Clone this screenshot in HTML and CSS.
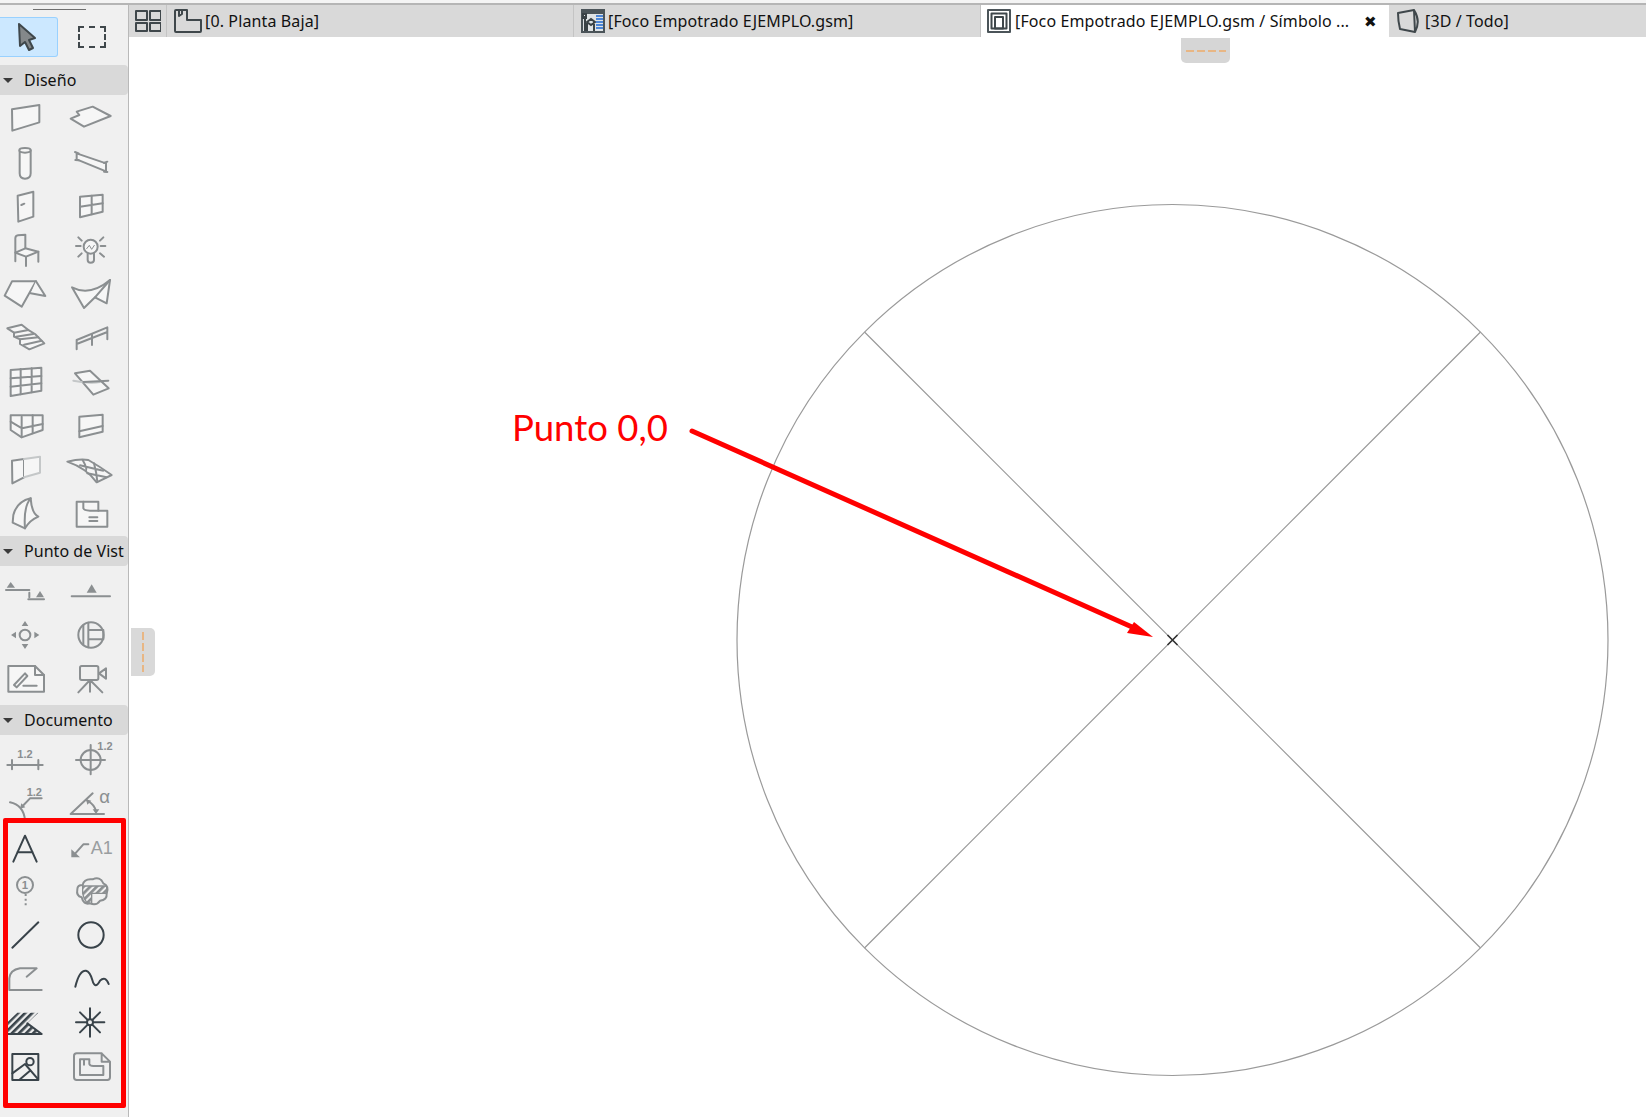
FILE: index.html
```html
<!DOCTYPE html>
<html lang="es">
<head>
<meta charset="utf-8">
<title>Foco Empotrado EJEMPLO.gsm</title>
<link rel="stylesheet" href="styles.css">
</head>
<body>
<div class="topline"></div>
<div class="app">
  <aside class="sidebar">
    <div class="grip"></div>
    <div class="tools-top">
      <div class="tool-selected">
        <svg width="58" height="40" viewBox="0 17 58 40"><path class="pointer" d="M19 24L35 38L29 40L33 48L29 50L25 42L20 46Z"/></svg>
      </div>
      <div class="tool-marquee"></div>
    </div>

    <div class="sec-head"><i class="tri"></i><span class="sec-title">Diseño</span></div>
    <div class="grid first">
      <svg class="ic" viewBox="9 18 132 132"><path class="fl" d="M36 58L118 45V97L37 122Z"/></svg>
      <svg class="ic" viewBox="207 18 132 132"><path class="fl" d="M212 86L238 75L230 65L278 50L332 78L252 110Z"/></svg>
      <svg class="ic" viewBox="9 150 132 132"><path class="fl" d="M59 181V250Q59 266 75 266Q92 266 92 250V181"/><ellipse class="fl" cx="75" cy="181" rx="17" ry="7"/></svg>
      <svg class="ic" viewBox="207 150 132 132"><path class="fl" d="M230 190L318 220V244L230 208Z"/><path d="M225 186L236 190M226 210L236 211M312 219L322 215M312 245L322 246"/></svg>
      <svg class="ic" viewBox="9 282 132 132"><path class="fl" d="M53 317L100 305V380L55 395Z"/><path d="M64 345L73 341"/></svg>
      <svg class="ic" viewBox="207 282 132 132"><path class="fl" d="M240 320L308 314V365L240 382Z"/><path d="M240 350L308 340M275 317V373"/></svg>
      <svg class="ic" viewBox="9 414 132 132"><path d="M46 514V445Q46 437 54 436L76 434V478M115 485V515M78 500V528M46 488V514"/><path class="fl" d="M46 488L76 475L115 485L78 500Z"/></svg>
      <svg class="ic" viewBox="207 414 132 132"><circle class="fl" cx="272" cy="470" r="21"/><path d="M263 490V510Q263 518 272 518Q282 518 282 510V490M228 468H242M302 468H316M235 442L245 452M310 442L300 452M235 500L245 490M312 500L300 490"/><path class="thin" d="M260 476L268 466L275 478L283 466"/></svg>
      <svg class="ic" viewBox="9 546 132 132"><path class="fl" d="M36 574H108L65 650L14 617Z"/><path class="fl" d="M108 574L136 618L92 610"/></svg>
      <svg class="ic" viewBox="207 546 132 132"><path class="fl" d="M216 592Q270 620 330 570L320 640L285 622L252 654Z"/><path d="M330 570L285 622"/></svg>

      <svg class="ic" viewBox="9 -12 132 132"><path class="fl" d="M22 25L65 14L88 32L105 42L133 70L88 88L60 72V58L42 50V38Z"/><path d="M42 38L85 30M48 50L100 42M60 58L115 52M72 74L125 62"/></svg>
      <svg class="ic" viewBox="207 -12 132 132"><path d="M230 88V60L322 22V58M230 72L322 36M276 42V75"/></svg>
      <svg class="ic" viewBox="9 120 132 132"><path class="fl" d="M32 150L124 143V212L32 228Z"/><path d="M32 175L124 168M32 200L124 190M62 147V223M95 145V217"/></svg>
      <svg class="ic" viewBox="207 120 132 132"><path class="fl" d="M225 160L270 152L326 205L280 224Z"/><path class="pale" d="M220 182Q270 192 300 186"/><path d="M250 186L325 182"/></svg>
      <svg class="ic" viewBox="9 252 132 132"><path class="fl" d="M32 286H128V330L65 352L32 330Z"/><path d="M32 305L66 325L128 312M65 290V352M98 286V340"/></svg>
      <svg class="ic" viewBox="207 252 132 132"><path class="fl" d="M238 290L308 284V335L238 352Z"/><path d="M238 334L308 318"/></svg>
      <svg class="ic" viewBox="9 384 132 132"><path class="fl" d="M36 422L72 417V472L37 490Z"/><path class="fl pale" d="M72 417L120 410V458L72 472"/></svg>
      <svg class="ic" viewBox="207 384 132 132"><path class="fl" d="M202 425Q240 415 265 420Q300 440 335 465L290 487Q260 445 202 425Z"/><path d="M248 420Q262 445 258 452M282 430Q290 460 292 485M240 436Q275 445 310 452M262 460L320 472"/></svg>
      <svg class="ic" viewBox="9 516 132 132"><path class="fl" d="M40 585Q50 545 92 535Q95 580 115 590Q90 600 75 625L38 608Z"/><path d="M92 535Q70 560 75 625"/></svg>
      <svg class="ic" viewBox="207 516 132 132"><path class="fl" d="M230 545H295V572H322V620H230Z"/><path d="M250 545V565Q252 572 270 572H295M268 592H292M268 603H292"/></svg>
    </div>

    <div class="sec-head"><i class="tri"></i><span class="sec-title">Punto de Vista</span></div>
    <div class="grid second">
      <svg class="ic" viewBox="9 84 132 132"><path class="sf" d="M32 126L20 143H45Z"/><path class="sf" d="M120 153L108 172H132Z"/><path d="M18 150H88M88 158V172"/><path d="M85 178H132"/></svg>
      <svg class="ic" viewBox="207 84 132 132"><path class="sf" d="M275 133L260 158H290Z"/><path d="M215 169H330"/></svg>
      <svg class="ic" viewBox="9 216 132 132"><circle cx="75" cy="285" r="16"/><path class="sf" d="M75 243L65 258H85ZM75 327L65 312H85ZM33 285L48 275V295ZM118 285L103 275V295Z"/></svg>
      <svg class="ic" viewBox="207 216 132 132"><circle cx="273" cy="285" r="38"/><path d="M265 248V322M265 270H310V298H265M250 256V314"/></svg>
      <svg class="ic" viewBox="9 348 132 132"><path class="fl" d="M25 378H105L132 405V455H25Z"/><path d="M105 378V405H132M42 435L75 400L82 408L50 442ZM70 437H110"/></svg>
      <svg class="ic" viewBox="207 348 132 132"><rect x="240" y="378" width="55" height="42" rx="5"/><path d="M297 400L318 385V416ZM270 420V455M270 420L235 457M270 420L307 457"/></svg>
    </div>

    <div class="sec-head doc"><i class="tri"></i><span class="sec-title">Documento</span></div>
    <div class="grid third">
      <svg class="ic" viewBox="9 594 132 132"><text class="num" x="52" y="654">1.2</text><path d="M22 675H128M36 660V688M115 660V688"/></svg>
      <svg class="ic" viewBox="207 594 132 132"><circle cx="272" cy="660" r="30"/><path d="M228 660H315M272 615V703"/><text class="num" x="292" y="630">1.2</text></svg>
      <svg class="ic" viewBox="9 726 132 132"><text class="num" x="80" y="767">1.2</text><path d="M30 787Q70 795 75 840M68 798L90 775H125"/><path class="sf" d="M60 806L64 790L76 802Z"/></svg>
      <svg class="ic" viewBox="207 726 132 132"><path d="M212 822H312M212 822L278 760M262 782Q285 795 288 815"/><path class="sf" d="M258 778L274 782L262 794ZM288 822L278 808H298Z"/><text class="alpha" x="298" y="790">α</text></svg>

      <svg class="ic dark" viewBox="9 48 132 132"><path d="M40 155L75 77L110 155M52 127H98"/></svg>
      <svg class="ic" viewBox="207 48 132 132"><path d="M265 103H250L226 130"/><path class="sf" d="M214 142V118L240 142Z"/><text class="a1" x="272" y="133">A1</text></svg>
      <svg class="ic" viewBox="9 180 132 132"><circle cx="75" cy="225" r="24"/><text class="mark" x="65" y="237">1</text><path class="dash" d="M77 252V292"/></svg>
      <svg class="ic" viewBox="207 180 132 132"><defs><pattern id="hatch-gray" width="14" height="14" patternUnits="userSpaceOnUse" patternTransform="rotate(45)"><rect width="5" height="14" fill="#8b8f91"/></pattern></defs><path d="M245 262Q228 258 232 238Q232 225 248 225Q252 205 278 208Q300 198 310 220Q328 228 320 250Q322 270 300 272Q290 288 270 280Q250 285 245 262Z"/><path class="hatch-gray" d="M248 228H320V250H275V280H262Q250 265 248 250Z"/></svg>
      <svg class="ic dark" viewBox="9 312 132 132"><path d="M37 413L115 337"/></svg>
      <svg class="ic dark" viewBox="207 312 132 132"><circle cx="273" cy="375" r="38"/></svg>
      <svg class="ic" viewBox="9 444 132 132"><path d="M80 500L110 475H60Q30 480 28 505V540H125"/></svg>
      <svg class="ic dark" viewBox="207 444 132 132"><path d="M226 530Q238 480 258 482Q270 485 277 510Q285 540 300 512Q316 496 326 522"/></svg>
      <svg class="ic dark" viewBox="9 576 132 132"><defs><pattern id="hatch-dark" width="15" height="15" patternUnits="userSpaceOnUse" patternTransform="rotate(45)"><rect width="5" height="15" fill="#39434a"/></pattern></defs><path class="hatch-dark" d="M24 672H125L82 640L115 608H52L24 635Z"/><path d="M24 672H125L82 640"/></svg>
      <svg class="ic dark" viewBox="207 576 132 132"><path d="M270 595V680M228 637H313M240 607L300 667M300 607L240 667"/><circle class="white" cx="270" cy="637" r="9"/></svg>
      <svg class="ic dark" viewBox="9 708 132 132"><rect x="37" y="732" width="78" height="78"/><circle cx="90" cy="755" r="11"/><path d="M37 790L75 762L112 805M60 808L90 782"/></svg>
      <svg class="ic" viewBox="207 708 132 132"><path d="M222 738Q222 730 230 730H305L330 755V802Q330 810 322 810H230Q222 810 222 802ZM305 730V755H330"/><path d="M240 748H268V762Q270 768 280 768H310V795H240ZM252 750V764"/></svg>
    </div>

    <div class="red-frame"></div>
  </aside>

  <main class="workspace">
    <nav class="tabs">
      <div class="tab-grid">
        <svg class="tab-svg" width="26" height="22" viewBox="0 0 26 22"><rect x="1" y="1" width="11" height="9"/><rect x="15" y="1" width="11" height="9"/><rect x="1" y="13" width="11" height="8"/><rect x="15" y="13" width="11" height="8"/></svg>
      </div>
      <div class="tab">
        <svg class="tab-svg" width="28" height="24" viewBox="0 0 28 24"><path d="M1 2Q1 1 2 1H13V11H27V22Q27 23 26 23H2Q1 23 1 22Z"/><path d="M5 1V7L8 5V1"/></svg>
        <span class="tab-text">[0. Planta Baja]</span>
      </div>
      <div class="tab">
        <svg width="24" height="24" viewBox="0 0 24 24"><rect x="0" y="0" width="24" height="24" fill="#4b5459"/><rect x="2" y="5" width="20" height="17" fill="#dfe3e5"/><path d="M2 5H5V9H2ZM4 22V7M13 22V12M6 13L10 10L14 13L10 16ZM6 22V14" fill="none" stroke="#3a4246" stroke-width="2"/><path d="M15 7H22M15 10H22M15 13H22M15 16H22M15 19H22" stroke="#4d86d6" stroke-width="2"/></svg>
        <span class="tab-text">[Foco Empotrado EJEMPLO.gsm]</span>
      </div>
      <div class="tab active">
        <svg class="tab-svg" width="24" height="24" viewBox="0 0 24 24"><rect x="1" y="1" width="22" height="22" stroke="#4b5459" stroke-width="2"/><rect x="4.5" y="4.5" width="15" height="15"/><rect x="8" y="8" width="8" height="11.5"/></svg>
        <span class="tab-text">[Foco Empotrado EJEMPLO.gsm / Símbolo ...</span>
        <span class="tab-close">✖</span>
      </div>
      <div class="tab last">
        <svg class="tab-svg" width="24" height="24" viewBox="0 0 24 24"><path d="M1 4L17 1L18 23L3 20Q1 12 1 4ZM17 1Q24 12 18 23"/></svg>
        <span class="tab-text">[3D / Todo]</span>
      </div>
    </nav>
    <section class="canvas">
      <svg class="drawing" viewBox="129 37 1517 1080">
        <circle class="geo" cx="1172.5" cy="640" r="435.5"/>
        <path class="geo" d="M864.5 332L1480.5 948M1480.5 332L864.5 948"/>
        <path class="origin" d="M1167.5 635L1177.5 645M1177.5 635L1167.5 645"/>
        <path class="arrow-line" d="M692 431L1132 627"/>
        <path class="arrow-head" d="M1134 622L1127 633L1153 637Z"/>
      </svg>
      <div class="note">Punto 0,0</div>
      <div class="handle-top"><span class="dashes-h"></span></div>
      <div class="handle-left"><span class="dashes-v"></span></div>
    </section>
  </main>
</div>
</body>
</html>
```
FILE: styles.css
```css
* { box-sizing: border-box; }
html, body { margin: 0; height: 100%; overflow: hidden; background: #fff; }
body { display: flex; flex-direction: column; font-family: "Noto Sans", "Open Sans", sans-serif; color: #111; }

.topline { height: 5px; flex: none; background: #f4f4f4; border-bottom: 2px solid #b5b5b5; }
.app { flex: 1; display: flex; min-height: 0; }

.sidebar { position: relative; flex: none; width: 129px; background: #f0f0f0; border-right: 1px solid #b9b9b9; overflow: hidden; }
.grip { width: 53px; height: 1px; margin: 4px 0 0 33px; background: #6f6f6f; }
.tools-top { display: flex; align-items: center; height: 40px; margin-top: 7px; }
.tool-selected { width: 58px; height: 40px; background: #cce8ff; border: 1px solid #99d1ff; border-left: 0; border-radius: 0 3px 3px 0; }
.tool-selected svg { display: block; margin: -1px 0 0; }
.pointer { fill: #84888a; stroke: #3f474b; stroke-width: 2; stroke-linejoin: round; }
.tool-marquee { width: 28px; height: 22px; margin-left: 20px; border: 2px dashed #3f474b; }

.sec-head { display: flex; align-items: center; width: 128px; height: 30px; margin-top: 8px; background: #d9d9d9; border-radius: 0 4px 4px 0; font-size: 16px; letter-spacing: 0.05px; }
.grid + .sec-head { margin-top: 0; }
.grid + .sec-head.doc { margin-top: 5px; }
.tri { width: 0; height: 0; margin: 0 11px 0 3px; border-style: solid; border-width: 5px 5px 0; border-color: #3b3b3b transparent transparent; }
.sec-title { width: 100px; overflow: hidden; white-space: nowrap; }

.grid { display: grid; grid-template-columns: 66px 66px; grid-auto-rows: 44px; justify-items: center; align-items: center; margin-left: -8px; }
.grid.first { margin-top: 1px; }
.grid.second { margin-top: 2px; }
.grid.third { margin-top: 3px; }

.ic { display: block; width: 44px; height: 44px; fill: none; stroke: #8b8f91; stroke-width: 6; stroke-linejoin: round; stroke-linecap: round; overflow: visible; }
.ic.dark { stroke: #39434a; }
.fl { fill: #f6f6f6; }
.sf { fill: #8b8f91; stroke: none; }
.thin { stroke-width: 3; }
.pale { stroke: #c4c7c8; }
.dash { stroke-dasharray: 6 8; stroke-linecap: butt; }
.white { fill: #f0f0f0; }
.hatch-dark { fill: url(#hatch-dark); stroke: none; }
.hatch-gray { fill: url(#hatch-gray); stroke-width: 4; }
.num { font: bold 33px "Liberation Sans", sans-serif; fill: #8b8f91; stroke: none; }
.alpha { font: 56px "Liberation Sans", sans-serif; fill: #8b8f91; stroke: none; }
.a1 { font: 54px "Liberation Sans", sans-serif; fill: #9a9ea0; stroke: none; }
.mark { font: bold 34px "Liberation Sans", sans-serif; fill: #8b8f91; stroke: none; }

.red-frame { position: absolute; left: 3px; top: 813px; width: 123px; height: 290px; border: 5px solid #f00; border-radius: 2px; }

.workspace { flex: 1; display: flex; flex-direction: column; min-width: 0; }
.tabs { display: flex; height: 32px; flex: none; background: #d9d9d9; font-size: 16px; letter-spacing: 0.12px; }
.tab-grid { width: 38px; display: flex; align-items: center; justify-content: center; border-right: 1px solid #c4c4c4; }
.tab { display: flex; align-items: center; gap: 3px; width: 407px; padding-left: 7px; border-right: 1px solid #c4c4c4; white-space: nowrap; }
.tab.active { width: 408px; padding-left: 6px; gap: 4px; background: #fff; border-right: 0; }
.tab.last { flex: 1; width: auto; padding-left: 8px; gap: 4px; border-right: 0; }
.tab-svg { fill: none; stroke: #3f474b; stroke-width: 2; stroke-linejoin: round; flex: none; }
.tab-text { display: block; margin-top: -1px; }
.tab-close { margin-left: auto; margin-right: 12px; font-size: 15px; line-height: 1; color: #111; }

.canvas { position: relative; flex: 1; background: #fff; overflow: hidden; }
.drawing { position: absolute; inset: 0; width: 100%; height: 100%; }
.geo { fill: none; stroke: #9a9a9a; stroke-width: 1.2; }
.origin { fill: none; stroke: #333; stroke-width: 1.6; }
.arrow-line { stroke: #f00; stroke-width: 5; stroke-linecap: round; fill: none; }
.arrow-head { fill: #f00; }
.note { position: absolute; left: 383px; top: 368px; font-family: Lato, "Liberation Sans", sans-serif; font-size: 36.5px; line-height: 44px; color: #f00; white-space: nowrap; }

.handle-top { position: absolute; left: 1052px; top: 1px; width: 49px; height: 25px; display: flex; align-items: center; justify-content: center; background: #d6d6d6; border-radius: 0 0 5px 5px; }
.dashes-h { display: block; width: 40px; height: 2px; background: repeating-linear-gradient(90deg, #e8b684 0 8px, transparent 8px 11px); }
.handle-left { position: absolute; left: 2px; top: 591px; width: 24px; height: 48px; display: flex; align-items: center; justify-content: center; background: #d9d9d9; border-radius: 0 5px 5px 0; }
.dashes-v { display: block; width: 2px; height: 40px; background: repeating-linear-gradient(180deg, #e8b684 0 8px, transparent 8px 11px); }
```
